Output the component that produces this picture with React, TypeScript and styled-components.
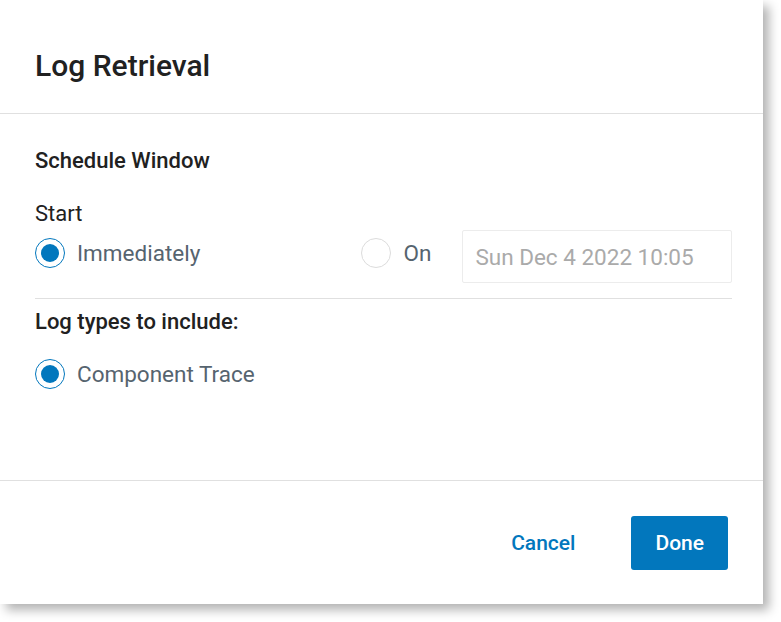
import styled, { createGlobalStyle } from "styled-components";

const GlobalStyle = createGlobalStyle`
  html, body {
    margin: 0;
    min-height: 100vh;
    background: #ffffff;
    font-family: Roboto, "Liberation Sans", sans-serif;
  }
  #root {
    padding-bottom: 18px;
  }
`;

const Dialog = styled.div`
  width: 763px;
  height: 604px;
  background: #ffffff;
  box-shadow: 6px 6px 10px rgba(0, 0, 0, 0.3);
  display: flex;
  flex-direction: column;
`;

const Header = styled.div`
  height: 114px;
  padding: 18px 35px 0;
  display: flex;
  align-items: center;
  border-bottom: 1px solid #e0e0e0;
  box-sizing: border-box;
  flex-shrink: 0;
`;

const Title = styled.h1`
  margin: 0;
  font-size: 30px;
  font-weight: 500;
  color: #212121;
`;

const Body = styled.div`
  flex: 1;
  padding: 34px 31px 0 35px;
  border-bottom: 1px solid #e0e0e0;
`;

const SectionTitle = styled.div`
  font-size: 22px;
  font-weight: 500;
  line-height: 26px;
  color: #212121;
`;

const FieldLabel = styled.div`
  margin-top: 27px;
  font-size: 22px;
  line-height: 26px;
  color: #212121;
`;

const StartRow = styled.div`
  margin-top: 3px;
  display: flex;
  align-items: flex-start;
`;

const Option = styled.label<{ $width?: number; $top?: number }>`
  display: flex;
  align-items: center;
  gap: 12px;
  margin-top: ${(p) => p.$top ?? 7}px;
  width: ${(p) => (p.$width ? `${p.$width}px` : "auto")};
  font-size: 22.5px;
  color: #56646f;
  cursor: pointer;
`;

const Radio = styled.span<{ $checked?: boolean }>`
  width: 30px;
  height: 30px;
  box-sizing: border-box;
  border-radius: 50%;
  border: 1px solid ${(p) => (p.$checked ? "#0277bd" : "#dcdcdc")};
  display: flex;
  align-items: center;
  justify-content: center;
  flex-shrink: 0;

  &::after {
    content: "";
    width: 18px;
    height: 18px;
    border-radius: 50%;
    background: ${(p) => (p.$checked ? "#0277bd" : "transparent")};
  }
`;

const DateInput = styled.div`
  margin-left: 31px;
  width: 270px;
  height: 53px;
  box-sizing: border-box;
  border: 1px solid #ececec;
  border-radius: 2px;
  padding: 0 12px;
  display: flex;
  align-items: center;
  font-size: 22.5px;
  color: #aaaaaa;
`;

const Divider = styled.div`
  height: 1px;
  background: #e0e0e0;
  margin: 15px 0 10px;
`;

const Footer = styled.div`
  height: 123px;
  padding: 0 35px;
  display: flex;
  align-items: center;
  justify-content: flex-end;
  gap: 32px;
  flex-shrink: 0;
`;

const Button = styled.button<{ $primary?: boolean }>`
  height: 54px;
  padding: 0 24px;
  border: none;
  border-radius: 3px;
  font-family: Roboto, "Liberation Sans", sans-serif;
  font-size: 21px;
  font-weight: 500;
  cursor: pointer;
  background: ${(p) => (p.$primary ? "#0277bd" : "transparent")};
  color: ${(p) => (p.$primary ? "#ffffff" : "#0277bd")};
`;

export default function App() {
  return (
    <>
      <GlobalStyle />
      <Dialog>
        <Header>
          <Title>Log Retrieval</Title>
        </Header>
        <Body>
          <SectionTitle>Schedule Window</SectionTitle>
          <FieldLabel>Start</FieldLabel>
          <StartRow>
            <Option $width={327} $top={8}>
              <Radio $checked />
              Immediately
            </Option>
            <Option $top={8}>
              <Radio />
              On
            </Option>
            <DateInput>Sun Dec 4 2022 10:05</DateInput>
          </StartRow>
          <Divider />
          <SectionTitle>Log types to include:</SectionTitle>
          <Option $top={24}>
            <Radio $checked />
            Component Trace
          </Option>
        </Body>
        <Footer>
          <Button>Cancel</Button>
          <Button $primary>Done</Button>
        </Footer>
      </Dialog>
    </>
  );
}
